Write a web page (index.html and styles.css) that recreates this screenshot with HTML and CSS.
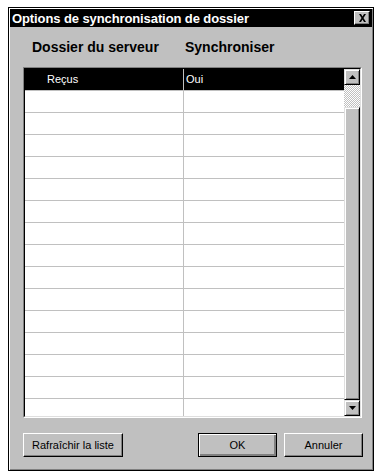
FILE: index.html
```html
<!DOCTYPE html>
<html lang="fr">
<head>
  <meta charset="UTF-8">
  <title>Options de synchronisation de dossier</title>
  <link rel="stylesheet" href="styles.css">
</head>
<body>
  <div class="dialog">
    <div class="titlebar">
      <span class="title">Options de synchronisation de dossier</span>
      <span class="close">
        <svg width="9" height="8" viewBox="0 0 9 8"><path d="M1 0h2l1.5 2.5L6 0h2L5.5 4 8 8H6L4.5 5.5 3 8H1l2.5-4z" fill="#000"/></svg>
      </span>
    </div>

    <div class="content">
      <div class="heads">
        <span class="h1">Dossier du serveur</span>
        <span class="h2">Synchroniser</span>
      </div>

      <div class="listbox">
        <div class="rows">
          <div class="row selected"><span class="c1">Reçus</span><span class="c2">Oui</span></div>
          <div class="row"><span class="c1"></span><span class="c2"></span></div>
          <div class="row"><span class="c1"></span><span class="c2"></span></div>
          <div class="row"><span class="c1"></span><span class="c2"></span></div>
          <div class="row"><span class="c1"></span><span class="c2"></span></div>
          <div class="row"><span class="c1"></span><span class="c2"></span></div>
          <div class="row"><span class="c1"></span><span class="c2"></span></div>
          <div class="row"><span class="c1"></span><span class="c2"></span></div>
          <div class="row"><span class="c1"></span><span class="c2"></span></div>
          <div class="row"><span class="c1"></span><span class="c2"></span></div>
          <div class="row"><span class="c1"></span><span class="c2"></span></div>
          <div class="row"><span class="c1"></span><span class="c2"></span></div>
          <div class="row"><span class="c1"></span><span class="c2"></span></div>
          <div class="row"><span class="c1"></span><span class="c2"></span></div>
          <div class="row"><span class="c1"></span><span class="c2"></span></div>
          <div class="row"><span class="c1"></span><span class="c2"></span></div>
        </div>
        <div class="scrollbar">
          <div class="sbtn">
            <svg width="7" height="4" viewBox="0 0 7 4"><path d="M3.5 0L7 4H0z" fill="#000"/></svg>
          </div>
          <div class="track"></div>
          <div class="thumb"></div>
          <div class="sbtn">
            <svg width="7" height="4" viewBox="0 0 7 4"><path d="M0 0h7L3.5 4z" fill="#000"/></svg>
          </div>
        </div>
      </div>

      <div class="footer">
        <button class="btn refresh">Rafraîchir la liste</button>
        <div class="right">
          <button class="btn default">OK</button>
          <button class="btn">Annuler</button>
        </div>
      </div>
    </div>
  </div>
</body>
</html>
```

FILE: styles.css
```css
* {
  margin: 0;
  padding: 0;
  box-sizing: border-box;
}
body {
  background-color: #fff;
  font-family: "Liberation Sans", Arial, sans-serif;
}
.dialog {
  margin: 7px 0 0 8px;
  width: 366px;
  height: 464px;
  padding: 1px;
  background-color: #c0c0c0;
  border: 1px solid #000;
  box-shadow: inset 1px 1px #fff, inset -1px -1px #808080;
  display: flex;
  flex-direction: column;
}
.titlebar {
  height: 18px;
  background-color: #000;
  color: #fff;
  display: flex;
  align-items: center;
  justify-content: space-between;
  padding: 0 2px 0 2px;
}
.titlebar .title {
  font-size: 13px;
  font-weight: bold;
  letter-spacing: -0.1px;
}
.titlebar .close {
  width: 16px;
  height: 14px;
  background-color: #c0c0c0;
  border: 1px solid;
  border-color: #fff #000 #000 #fff;
  box-shadow: inset -1px -1px #808080;
  display: flex;
  align-items: center;
  justify-content: center;
}
.content {
  flex: 1;
  padding: 12px 10px 0 13px;
  display: flex;
  flex-direction: column;
}
.heads {
  display: flex;
  font-size: 14px;
  font-weight: bold;
  line-height: 17px;
  padding-left: 9px;
  color: #000;
}
.heads .h1 {
  width: 153px;
}
.listbox {
  margin-top: 11px;
  width: 339px;
  height: 351px;
  border: 1px solid;
  border-color: #808080 #fff #fff #808080;
  display: flex;
  background-color: #fff;
  position: relative;
}
.listbox::before {
  content: "";
  position: absolute;
  left: 0;
  top: 0;
  right: 0;
  bottom: 0;
  border: 1px solid;
  border-color: #000 #dfdfdf #dfdfdf #000;
  pointer-events: none;
}
.rows {
  flex: 1;
  padding: 1px 0 0 1px;
  overflow: hidden;
}
.row {
  display: flex;
  height: 22px;
  border-bottom: 1px solid #c0c0c0;
  font-size: 11px;
  line-height: 21px;
  color: #000;
}
.row .c1 {
  width: 159px;
  padding-left: 22px;
  border-right: 1px solid #c0c0c0;
}
.row .c2 {
  flex: 1;
  padding-left: 2px;
}
.row.selected {
  background-color: #000;
  color: #fff;
}
.scrollbar {
  width: 17px;
  padding: 1px 1px 1px 0;
  display: flex;
  flex-direction: column;
  background-color: #c0c0c0;
}
.sbtn {
  height: 16px;
  background-color: #c0c0c0;
  border: 1px solid;
  border-color: #dfdfdf #000 #000 #dfdfdf;
  box-shadow: inset 1px 1px #fff, inset -1px -1px #808080;
  display: flex;
  align-items: center;
  justify-content: center;
}
.track {
  height: 22px;
  background: repeating-conic-gradient(#fff 0 25%, #c0c0c0 0 50%) 0 0 / 2px 2px;
}
.thumb {
  flex: 1;
  background-color: #c0c0c0;
  border: 1px solid;
  border-color: #dfdfdf #000 #000 #dfdfdf;
  box-shadow: inset 1px 1px #fff, inset -1px -1px #808080;
}
.footer {
  margin-top: 15px;
  display: flex;
  justify-content: space-between;
}
.footer .right {
  display: flex;
  gap: 7px;
  margin-right: -1px;
}
.btn {
  height: 24px;
  width: 79px;
  background-color: #c0c0c0;
  font-family: "Liberation Sans", Arial, sans-serif;
  font-size: 11px;
  color: #000;
  border: 1px solid;
  border-color: #fff #000 #000 #fff;
  box-shadow: inset -1px -1px #808080;
}
.btn.refresh {
  width: 100px;
}
.btn.default {
  border-color: #000;
  box-shadow: inset 1px 1px #fff, inset -2px -2px #808080;
}
```
